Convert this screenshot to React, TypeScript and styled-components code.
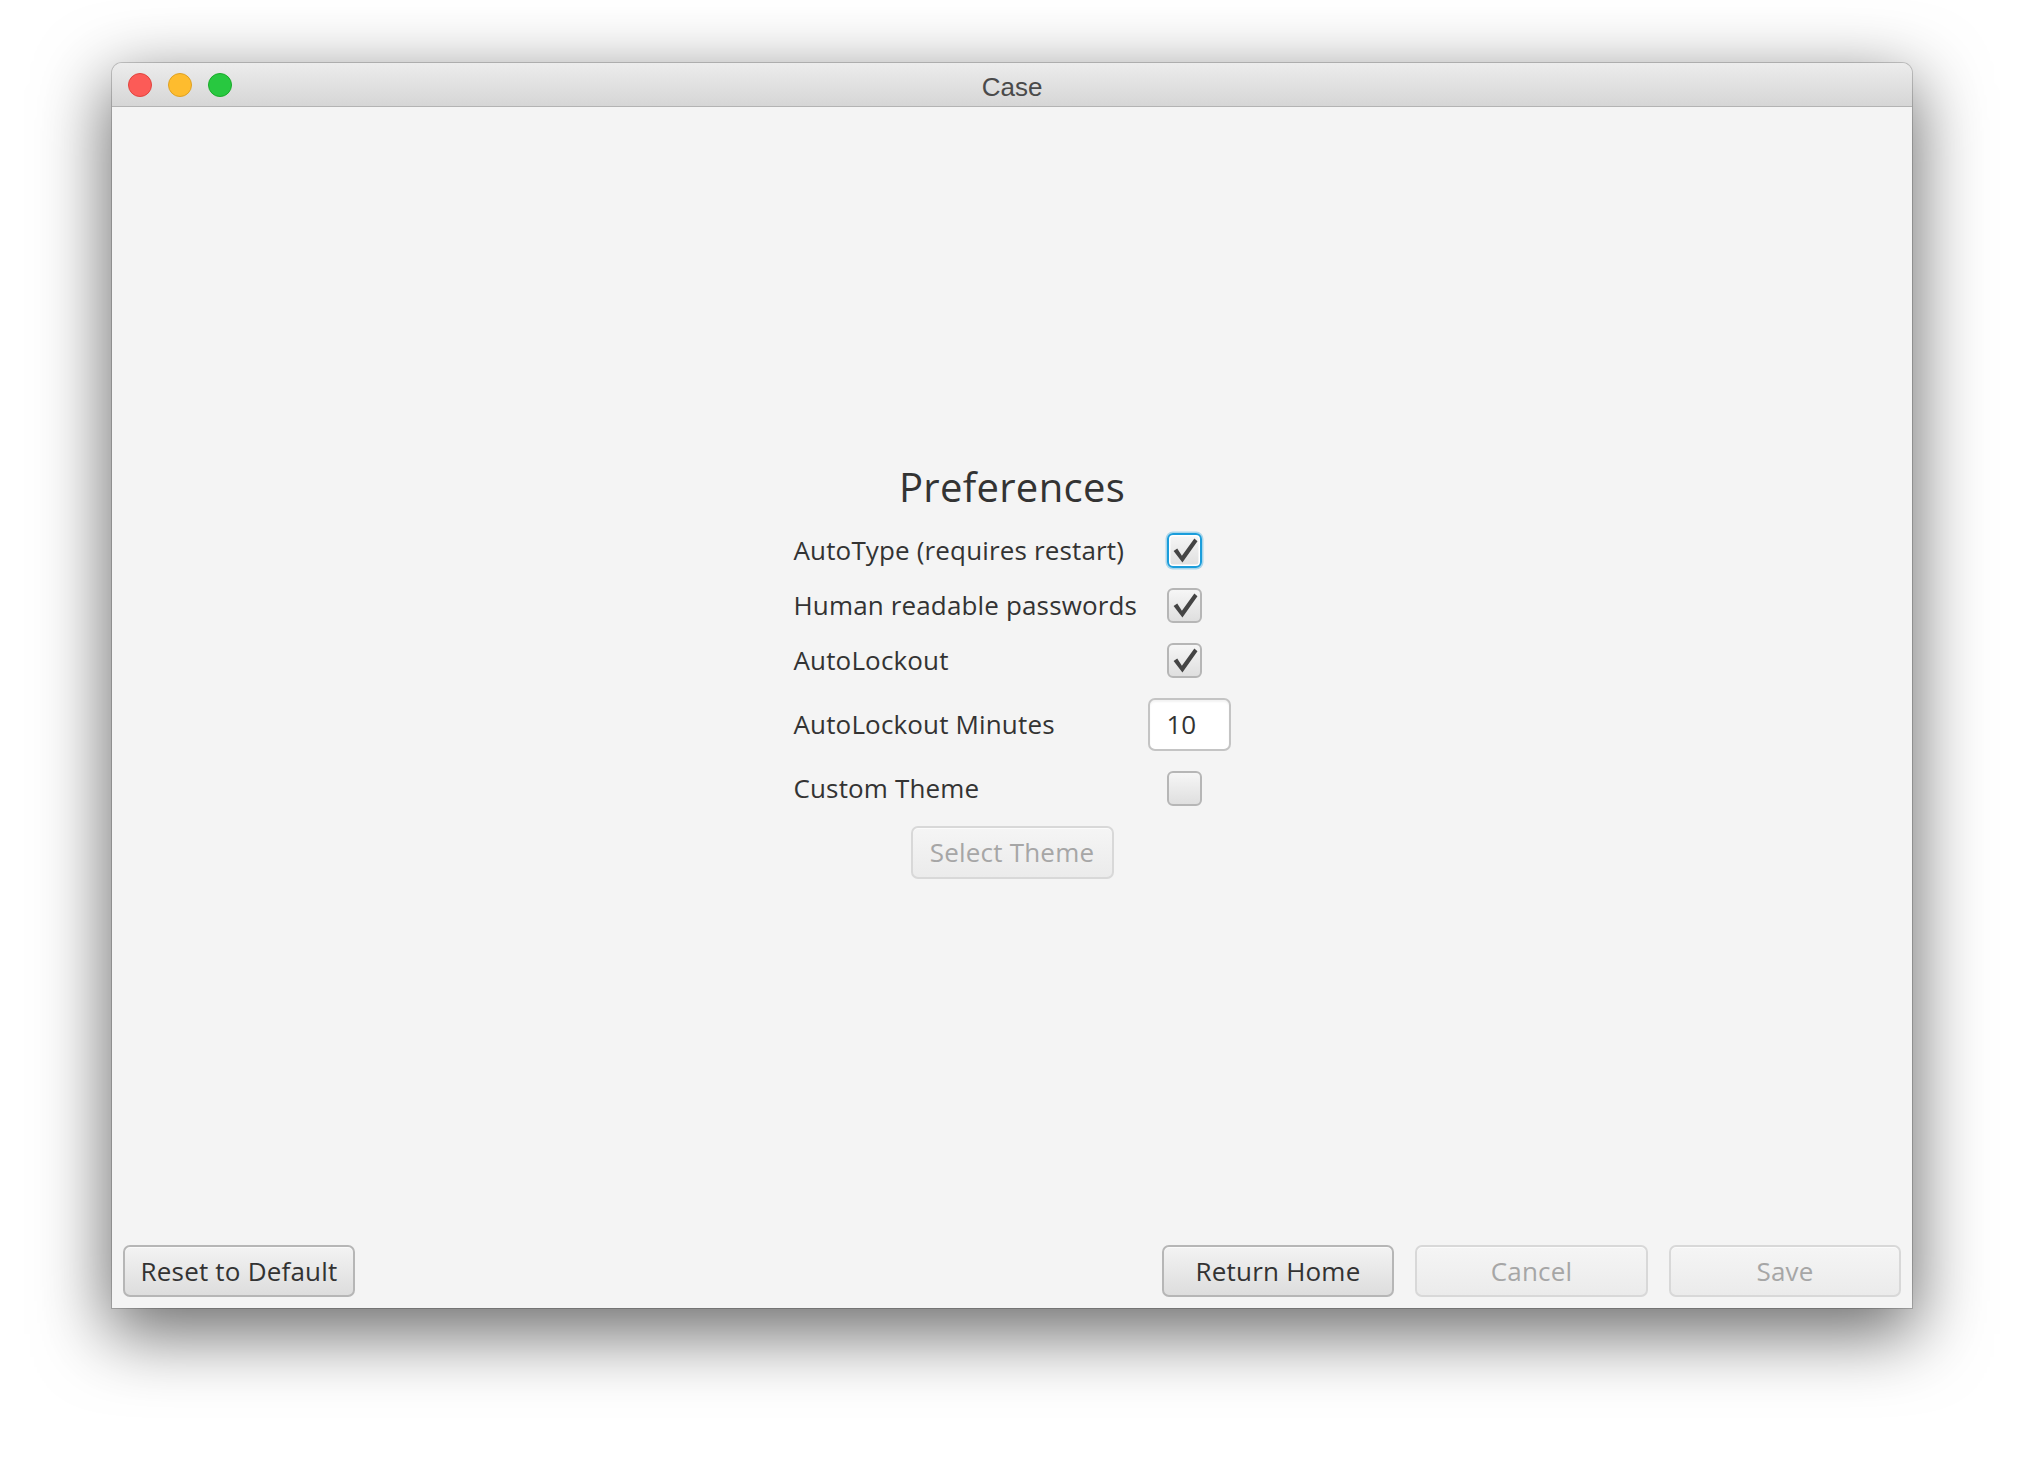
import React from 'react'
import styled, { createGlobalStyle, css } from 'styled-components'

const GlobalStyle = createGlobalStyle`
  html, body {
    margin: 0;
    padding: 0;
    background: #ffffff;
  }
  body {
    width: 2024px;
    height: 1468px;
    overflow: hidden;
    font-family: 'Open Sans', 'Liberation Sans', sans-serif;
  }
`

const S = {
  Page: styled.div`
    padding: 63px 0 0 112px;
  `,

  Window: styled.div`
    width: 1800px;
    height: 1245px;
    display: flex;
    flex-direction: column;
    background: #f4f4f4;
    border-radius: 10px 10px 0 0;
    box-shadow: 0 0 0 1px rgba(0, 0, 0, 0.18), 0 22px 70px 4px rgba(0, 0, 0, 0.58);
    overflow: hidden;
  `,

  TitleBar: styled.div`
    position: relative;
    height: 43px;
    flex: none;
    display: flex;
    align-items: center;
    justify-content: center;
    background: linear-gradient(#ececec, #d6d6d6);
    border-bottom: 1px solid #b3b3b3;
  `,

  Lights: styled.div`
    position: absolute;
    left: 16px;
    top: 10px;
    display: flex;
    gap: 16px;
  `,

  Light: styled.div<{ fill: string; ring: string }>`
    width: 22px;
    height: 22px;
    border-radius: 50%;
    background: ${p => p.fill};
    border: 1px solid ${p => p.ring};
  `,

  Title: styled.div`
    font-family: 'Liberation Sans', Arial, sans-serif;
    font-size: 26px;
    color: #4a4a4a;
    margin-top: 5px;
  `,

  Content: styled.div`
    flex: 1;
    display: flex;
    flex-direction: column;
  `,

  Main: styled.div`
    flex: 1;
    display: flex;
    align-items: center;
    justify-content: center;
  `,

  Form: styled.div`
    display: grid;
    grid-template-columns: 339px 83px;
    column-gap: 15px;
    row-gap: 20px;
    align-items: center;
  `,

  Heading: styled.h1`
    grid-column: 1 / span 2;
    justify-self: center;
    margin: 0 0 6px;
    font-size: 40px;
    line-height: 40px;
    font-weight: 400;
    letter-spacing: 0.3px;
    color: #333333;
  `,

  Label: styled.div`
    font-size: 26px;
    line-height: 34px;
    letter-spacing: 0.15px;
    color: #333333;
    white-space: nowrap;
  `,

  Check: styled.div<{ focused?: boolean }>`
    width: 31px;
    height: 31px;
    margin-left: 19px;
    display: flex;
    align-items: center;
    justify-content: center;
    border: 2px solid #b6b6b6;
    border-radius: 6px;
    background: linear-gradient(#f6f6f6, #dfdfdf);
    ${p =>
      p.focused &&
      css`
        border-color: #1a9ddb;
        box-shadow: inset 0 0 0 1.5px #ffffff, 0 0 0 1.5px rgba(26, 157, 219, 0.35);
      `}
  `,

  Field: styled.div`
    width: 79px;
    height: 49px;
    box-sizing: content-box;
    display: flex;
    align-items: center;
    border: 2px solid #c4c4c4;
    border-radius: 7px;
    background: #ffffff;
    box-shadow: inset 0 2px 2px rgba(0, 0, 0, 0.05);
  `,

  FieldText: styled.span`
    margin-left: 17px;
    font-size: 26px;
    color: #333333;
  `,

  Footer: styled.div`
    flex: none;
    display: flex;
    align-items: center;
    padding: 7px 11px 11px;
    gap: 21px;
  `,

  Spacer: styled.div`
    flex: 1;
  `,

  Button: styled.button<{ w: number; h: number }>`
    width: ${p => p.w}px;
    height: ${p => p.h}px;
    padding: 0;
    font-family: 'Open Sans', 'Liberation Sans', sans-serif;
    font-size: 26px;
    letter-spacing: 0.2px;
    color: #333333;
    border: 2px solid #b6b6b6;
    border-radius: 7px;
    background: linear-gradient(#f3f3f3, #dddddd);
    box-shadow: inset 0 1px 0 rgba(255, 255, 255, 0.6);
    cursor: default;

    &:disabled {
      color: #a6a6a6;
      border-color: #d8d8d8;
      background: linear-gradient(#f5f5f5, #ebebeb);
    }
  `,

  ThemeButton: styled.div`
    grid-column: 1 / span 2;
    justify-self: center;
  `,
}

const CheckMark = () => (
  <svg width="27" height="27" viewBox="0 0 26 26">
    <polygon points="2.5,13.5 6,11 10.5,18 22.5,1.5 25.5,4 11,24.5" fill="#444444" />
  </svg>
)

type RowProps = { label: string; checked?: boolean; focused?: boolean }

const CheckRow: React.FC<RowProps> = props => (
  <>
    <S.Label>{props.label}</S.Label>
    <S.Check focused={props.focused}>{props.checked && <CheckMark />}</S.Check>
  </>
)

const App: React.FC = () => (
  <S.Page>
    <GlobalStyle />
    <S.Window>
      <S.TitleBar>
        <S.Lights>
          <S.Light fill="#fc5b57" ring="#e0443e" />
          <S.Light fill="#febc2e" ring="#dea123" />
          <S.Light fill="#28c840" ring="#1aab29" />
        </S.Lights>
        <S.Title>Case</S.Title>
      </S.TitleBar>

      <S.Content>
        <S.Main>
          <S.Form>
            <S.Heading>Preferences</S.Heading>
            <CheckRow label="AutoType (requires restart)" checked focused />
            <CheckRow label="Human readable passwords" checked />
            <CheckRow label="AutoLockout" checked />
            <S.Label>AutoLockout Minutes</S.Label>
            <S.Field>
              <S.FieldText>10</S.FieldText>
            </S.Field>
            <CheckRow label="Custom Theme" />
            <S.ThemeButton>
              <S.Button w={203} h={53} disabled>
                Select Theme
              </S.Button>
            </S.ThemeButton>
          </S.Form>
        </S.Main>

        <S.Footer>
          <S.Button w={232} h={52}>
            Reset to Default
          </S.Button>
          <S.Spacer />
          <S.Button w={232} h={52}>
            Return Home
          </S.Button>
          <S.Button w={233} h={52} disabled>
            Cancel
          </S.Button>
          <S.Button w={232} h={52} disabled>
            Save
          </S.Button>
        </S.Footer>
      </S.Content>
    </S.Window>
  </S.Page>
)

export default App
